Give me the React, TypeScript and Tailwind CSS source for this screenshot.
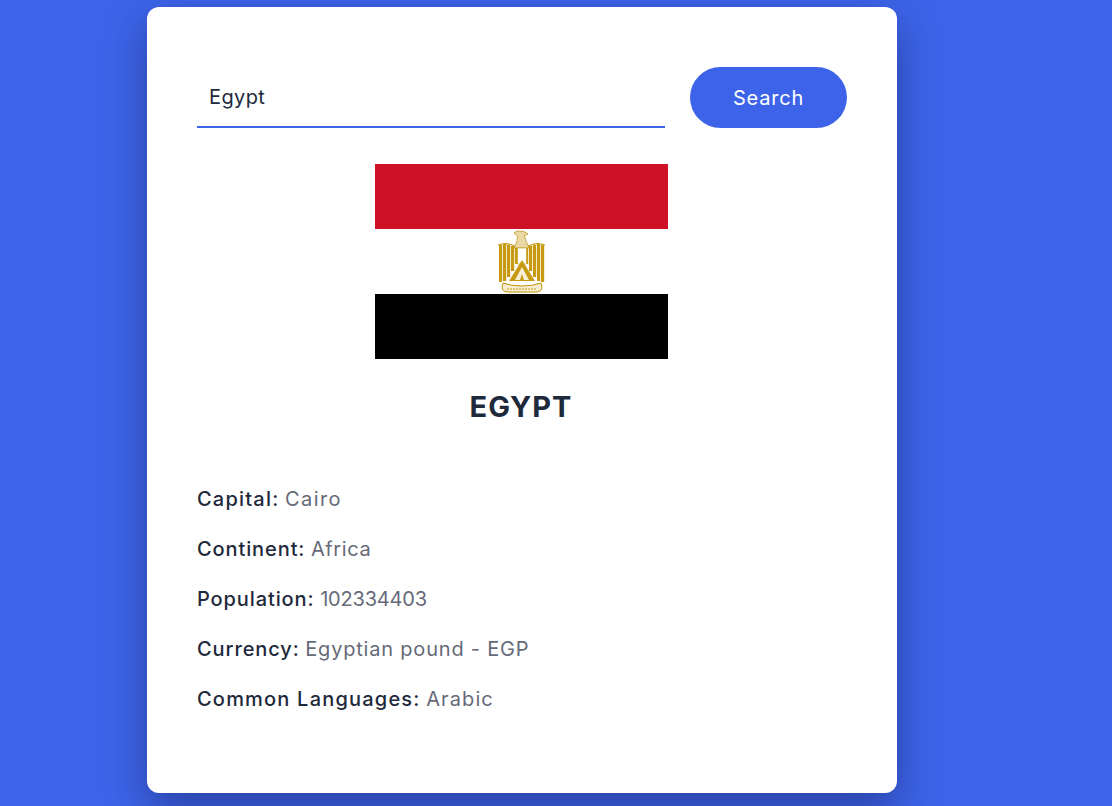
const rows = [
  { label: "Capital:", value: "Cairo", labelClass: "tracking-[1.2px]", valueClass: "tracking-[1.4px]" },
  { label: "Continent:", value: "Africa", labelClass: "tracking-[0.9px]", valueClass: "tracking-[0.6px]" },
  { label: "Population:", value: "102334403", labelClass: "tracking-[0.9px]", valueClass: "tracking-[-0.2px]" },
  { label: "Currency:", value: "Egyptian pound - EGP", labelClass: "tracking-[0.9px]", valueClass: "tracking-[0.8px]" },
  { label: "Common Languages:", value: "Arabic", labelClass: "tracking-[1.2px]", valueClass: "tracking-[1.1px]" },
];

// x, top, bottom of the left wing feathers, the right wing mirrors them
const feathers = [
  [124, 81, 118],
  [128, 80, 117],
  [132, 81, 113],
  [136, 82, 107],
  [140, 83, 100],
];

const EgyptFlag = () => {
  return (
    <svg viewBox="0 0 293 195" className="block w-[293px] h-[195px] ml-[178px]">
      <rect width="293" height="65" fill="#ce1126" />
      <rect y="65" width="293" height="65" fill="#ffffff" />
      <rect y="130" width="293" height="65" fill="#000000" />
      {/* eagle */}
      {feathers.map(([x, top, bottom]) => (
        <g key={x} fill="#c79a12">
          <rect x={x} y={top} width="3.2" height={bottom - top} />
          <rect x={290 - x} y={top} width="3.2" height={bottom - top} />
        </g>
      ))}
      <path d="M123 81 Q133 77 143 84 M170 81 Q160 77 150 84" fill="none" stroke="#c79a12" strokeWidth="1.2" />
      <path d="M139 69 L142 67 L149 67.5 L153 70 L149.5 71.5 L151 77 L154 84 L139 84 L142 77 L142.5 72 Z" fill="#ead9a4" stroke="#b98f10" strokeWidth="0.7" />
      <rect x="142.5" y="84" width="9" height="16" fill="#ffffff" stroke="#c79a12" strokeWidth="0.6" />
      <path d="M147 96 L134 117 L160 117 Z" fill="#c79a12" />
      <path d="M147 103 L140 116 L145 116 L147 110 L149 116 L154 116 Z" fill="#f7efd6" />
      <path d="M128 119 Q125 127 132 128 L162 128 Q169 127 166 119 Q158 122 147 122 Q136 122 128 119 Z" fill="#f6edd2" stroke="#c09300" strokeWidth="1" />
      <path d="M132 125 L162 125" stroke="#c79a12" strokeWidth="1" strokeDasharray="2 1" />
    </svg>
  );
};

const App = () => {
  return (
    <div className="min-h-[806px] bg-[#3d64e8] pt-[7px] font-['Inter',sans-serif] overflow-hidden">
      <div className="ml-[147px] w-[750px] h-[786px] bg-white rounded-xl px-[50px] pt-[60px] shadow-[0_16px_40px_rgba(20,30,90,0.48)]">
        <div className="flex gap-[25px] items-stretch">
          <div className="flex-1 h-[61px] border-b-2 border-[#3d64e8] px-3 flex items-center text-[20px] tracking-[0.4px] text-[#1e293b]">
            Egypt
          </div>
          <button className="w-[157px] h-[61px] rounded-[31px] bg-[#3d64e8] text-white text-[20px] tracking-[0.8px]">Search</button>
        </div>
        <div className="mt-[36px]">
          <EgyptFlag />
        </div>
        <h1 className="mt-[25px] text-center text-[29px] leading-[45px] font-bold tracking-[1px] text-[#1e293b] pr-[2px]">EGYPT</h1>
        <div className="mt-[55px] flex flex-col gap-[20px]">
          {rows.map((row) => (
            <p key={row.label} className="text-[20px] leading-[30px] text-[#666a78]">
              <span className={`font-medium text-[#1e293b] ${row.labelClass}`}>{row.label}</span>{" "}
              <span className={row.valueClass}>{row.value}</span>
            </p>
          ))}
        </div>
      </div>
    </div>
  );
};

export default App;
